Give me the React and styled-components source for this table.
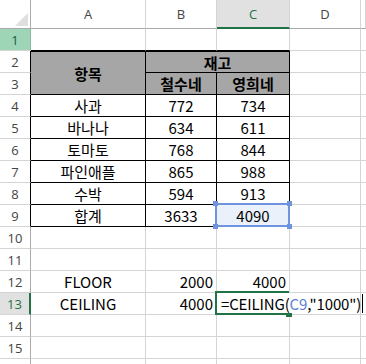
import React from "react";
import styled, { createGlobalStyle } from "styled-components";

const Global = createGlobalStyle`
  html, body { margin: 0; padding: 0; background: #fff; }
  body { overflow: hidden; }
`;

const GRID = "#d4d4d4";
const HEAD_LINE = "#ababab";
const GREEN = "#217346";
const BLUE = "#6f93dd";

const Sheet = styled.div`
  display: grid;
  grid-template-columns: 31px 115px 71px 73px 71px 5px;
  grid-template-rows: 29px repeat(15, 22px) 6px;
  width: 366px;
  height: 364px;
  overflow: hidden;
  font-family: "Noto Sans CJK KR", "Open Sans", sans-serif;
`;

const Cell = styled.div`
  grid-row: ${(p) => p.$r} / span ${(p) => p.$rs || 1};
  grid-column: ${(p) => p.$c} / span ${(p) => p.$cs || 1};
  box-sizing: border-box;
  position: relative;
  display: flex;
  align-items: center;
  justify-content: ${(p) =>
    p.$align === "right" ? "flex-end" : p.$align === "left" ? "flex-start" : "center"};
  padding: 0 3px;
  border-top: ${(p) => (p.$bt ? `1px solid ${p.$bt}` : "none")};
  border-right: 1px solid ${(p) => p.$br || GRID};
  border-bottom: 1px solid ${(p) => p.$bb || GRID};
  background: ${(p) => p.$bg || "#fff"};
  font-size: 15px;
  font-weight: ${(p) => (p.$bold ? 700 : 400)};
  color: #000;
  white-space: nowrap;
`;

const Header = styled.div`
  grid-row: ${(p) => p.$r};
  grid-column: ${(p) => p.$c};
  box-sizing: border-box;
  display: flex;
  align-items: center;
  justify-content: center;
  font-family: "Open Sans", "Noto Sans", sans-serif;
  font-size: 13px;
  color: ${(p) => p.$fg || "#444"};
  background: ${(p) => p.$bg || "#fff"};
  border-right: ${(p) => p.$brw || 1}px solid ${(p) => p.$br || GRID};
  border-bottom: ${(p) => p.$bbw || 1}px solid ${(p) => p.$bb || GRID};
`;

const Corner = styled(Header)`
  align-items: flex-end;
  justify-content: flex-end;
  padding: 0 2px 2px 0;
  border-right-color: ${HEAD_LINE};
  border-bottom-color: ${HEAD_LINE};
  &::after {
    content: "";
    width: 0;
    height: 0;
    border-left: 13px solid transparent;
    border-bottom: 13px solid #dfdfdf;
  }
`;

const RefBox = styled.div`
  position: absolute;
  left: -2px;
  top: -2px;
  right: -1px;
  bottom: -1px;
  border: 2px solid ${BLUE};
  pointer-events: none;
`;

const Handle = styled.span`
  position: absolute;
  width: 5px;
  height: 5px;
  background: ${BLUE};
  ${(p) => (p.$x === "l" ? "left: -4px;" : "right: -4px;")}
  ${(p) => (p.$y === "t" ? "top: -4px;" : "bottom: -4px;")}
`;

const ActiveBox = styled.div`
  position: absolute;
  left: -2px;
  top: -2px;
  width: 74px;
  height: 24px;
  box-sizing: border-box;
  border: 2px solid ${GREEN};
  border-right: none;
  pointer-events: none;
`;

const FillHandle = styled.span`
  position: absolute;
  left: 69px;
  bottom: -3px;
  width: 6px;
  height: 4px;
  background: ${GREEN};
`;

const Ref = styled.span`
  color: #5b80d6;
`;

const Caret = styled.span`
  display: inline-block;
  width: 1px;
  height: 19px;
  margin-left: 1px;
  background: #000;
`;

const Formula = styled.span`
  padding-left: 1px;
  display: flex;
  align-items: center;
  letter-spacing: -0.15px;
`;

const cols = ["A", "B", "C", "D"];
const HEAD_GRAY = "#a6a6a6";

const data = [
  ["사과", 772, 734],
  ["바나나", 634, 611],
  ["토마토", 768, 844],
  ["파인애플", 865, 988],
  ["수박", 594, 913],
  ["합계", 3633, 4090],
];

export default function App() {
  const rowHeaders = [];
  for (let r = 1; r <= 16; r++) {
    const gr = r + 1;
    let props = { $br: HEAD_LINE };
    if (r === 1) props = { $bg: "#9fd5b7", $fg: "#1e5c39", $br: "#8cb89e" };
    if (r >= 2 && r <= 9) props = { $br: "#000" };
    if (r === 13) props = { $bg: "#e1e1e1", $fg: GREEN, $br: GREEN, $brw: 2 };
    rowHeaders.push(
      <Header key={"rh" + r} $r={gr} $c={1} {...props}>
        {r <= 15 ? r : ""}
      </Header>
    );
  }

  const colHeaders = cols.map((c, i) => (
    <Header
      key={"ch" + c}
      $r={1}
      $c={i + 2}
      $bb={c === "C" ? GREEN : HEAD_LINE}
      $bbw={c === "C" ? 2 : 1}
      $bg={c === "C" ? "#e1e1e1" : "#fff"}
      $fg={c === "C" ? GREEN : "#444"}
    >
      {c}
    </Header>
  ));

  const body = [];
  // blank cells outside the table
  for (let r = 1; r <= 16; r++) {
    const gr = r + 1;
    for (let c = 2; c <= 6; c++) {
      const inTable = r >= 2 && r <= 9 && c <= 4;
      const special = (r === 12 || r === 13) && c <= 5;
      if (inTable || special) continue;
      body.push(
        <Cell key={`e${r}-${c}`} $r={gr} $c={c} $bb={r === 1 && c <= 4 ? "#000" : GRID} />
      );
    }
  }

  // table header (merged cells)
  body.push(
    <Cell key="h-a" $r={3} $c={2} $rs={2} $bg={HEAD_GRAY} $bold $bt="#000" $bb="#000" $br="#000">
      항목
    </Cell>,
    <Cell key="h-bc" $r={3} $c={3} $cs={2} $bg={HEAD_GRAY} $bold $bt="#000" $bb="#000" $br="#000">
      재고
    </Cell>,
    <Cell key="h-b" $r={4} $c={3} $bg={HEAD_GRAY} $bold $bb="#000" $br="#000">
      철수네
    </Cell>,
    <Cell key="h-c" $r={4} $c={4} $bg={HEAD_GRAY} $bold $bb="#000" $br="#000">
      영희네
    </Cell>
  );

  data.forEach(([name, b, c], i) => {
    const gr = i + 5;
    const last = i === data.length - 1;
    body.push(
      <Cell key={"a" + i} $r={gr} $c={2} $bb="#000" $br="#000">
        {name}
      </Cell>,
      <Cell key={"b" + i} $r={gr} $c={3} $bb="#000" $br="#000">
        {b}
      </Cell>,
      <Cell key={"c" + i} $r={gr} $c={4} $bb="#000" $br="#000" $bg={last ? "#eaf1fb" : "#fff"}>
        {c}
        {last && (
          <RefBox>
            <Handle $x="l" $y="t" />
            <Handle $x="r" $y="t" />
            <Handle $x="l" $y="b" />
            <Handle $x="r" $y="b" />
          </RefBox>
        )}
      </Cell>
    );
  });

  body.push(
    <Cell key="f-a" $r={13} $c={2}>
      FLOOR
    </Cell>,
    <Cell key="f-b" $r={13} $c={3} $align="right">
      2000
    </Cell>,
    <Cell key="f-c" $r={13} $c={4} $align="right">
      4000
    </Cell>,
    <Cell key="f-d" $r={13} $c={5} />,
    <Cell key="g-a" $r={14} $c={2}>
      CEILING
    </Cell>,
    <Cell key="g-b" $r={14} $c={3} $align="right">
      4000
    </Cell>,
    <Cell key="g-c" $r={14} $c={4} $cs={2} $align="left">
      <Formula>
        =CEILING(<Ref>C9</Ref>,"1000")
        <Caret />
      </Formula>
      <ActiveBox />
      <FillHandle />
    </Cell>
  );

  return (
    <>
      <Global />
      <Sheet>
        <Corner $r={1} $c={1} />
        {colHeaders}
        <Header $r={1} $c={6} $bb={HEAD_LINE} />
        {rowHeaders}
        {body}
      </Sheet>
    </>
  );
}
